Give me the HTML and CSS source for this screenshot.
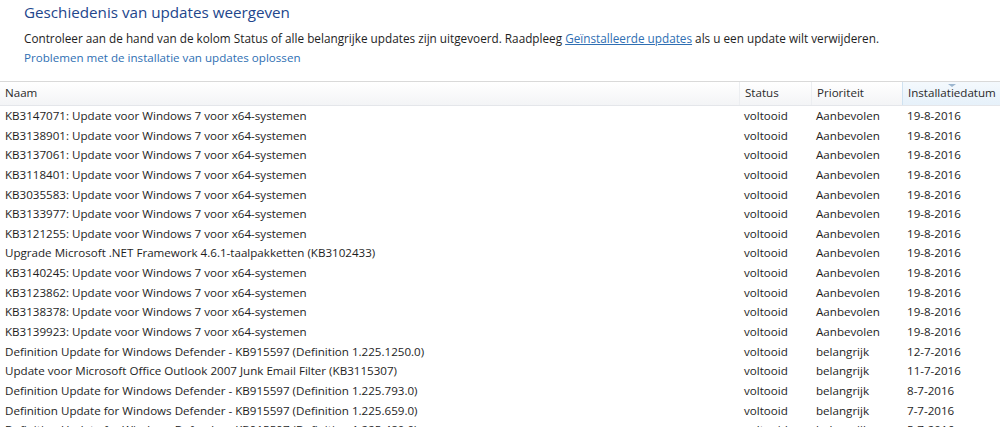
FILE: index.html
```html
<!DOCTYPE html>
<html lang="nl">
<head>
<meta charset="utf-8">
<title>Geschiedenis van updates weergeven</title>
<link rel="stylesheet" href="styles.css">
</head>
<body>
<div class="intro">
  <h1 class="title">Geschiedenis van updates weergeven</h1>
  <p class="desc">Controleer aan de hand van de kolom Status of alle belangrijke updates zijn uitgevoerd. Raadpleeg <a class="ul-link" href="#">Geïnstalleerde updates</a> als u een update wilt verwijderen.</p>
  <p class="fix"><a class="plain-link" href="#">Problemen met de installatie van updates oplossen</a></p>
</div>
<div class="list">
  <div class="row head">
    <div class="cell">Naam</div>
    <div class="cell sep">Status</div>
    <div class="cell sep">Prioriteit</div>
    <div class="cell sep sorted">Installatiedatum<span class="arrow"></span></div>
  </div>
  <div class="row"><div class="cell">KB3147071: Update voor Windows 7 voor x64-systemen</div><div class="cell">voltooid</div><div class="cell">Aanbevolen</div><div class="cell">19-8-2016</div></div>
  <div class="row"><div class="cell">KB3138901: Update voor Windows 7 voor x64-systemen</div><div class="cell">voltooid</div><div class="cell">Aanbevolen</div><div class="cell">19-8-2016</div></div>
  <div class="row"><div class="cell">KB3137061: Update voor Windows 7 voor x64-systemen</div><div class="cell">voltooid</div><div class="cell">Aanbevolen</div><div class="cell">19-8-2016</div></div>
  <div class="row"><div class="cell">KB3118401: Update voor Windows 7 voor x64-systemen</div><div class="cell">voltooid</div><div class="cell">Aanbevolen</div><div class="cell">19-8-2016</div></div>
  <div class="row"><div class="cell">KB3035583: Update voor Windows 7 voor x64-systemen</div><div class="cell">voltooid</div><div class="cell">Aanbevolen</div><div class="cell">19-8-2016</div></div>
  <div class="row"><div class="cell">KB3133977: Update voor Windows 7 voor x64-systemen</div><div class="cell">voltooid</div><div class="cell">Aanbevolen</div><div class="cell">19-8-2016</div></div>
  <div class="row"><div class="cell">KB3121255: Update voor Windows 7 voor x64-systemen</div><div class="cell">voltooid</div><div class="cell">Aanbevolen</div><div class="cell">19-8-2016</div></div>
  <div class="row"><div class="cell">Upgrade Microsoft .NET Framework 4.6.1-taalpakketten (KB3102433)</div><div class="cell">voltooid</div><div class="cell">Aanbevolen</div><div class="cell">19-8-2016</div></div>
  <div class="row"><div class="cell">KB3140245: Update voor Windows 7 voor x64-systemen</div><div class="cell">voltooid</div><div class="cell">Aanbevolen</div><div class="cell">19-8-2016</div></div>
  <div class="row"><div class="cell">KB3123862: Update voor Windows 7 voor x64-systemen</div><div class="cell">voltooid</div><div class="cell">Aanbevolen</div><div class="cell">19-8-2016</div></div>
  <div class="row"><div class="cell">KB3138378: Update voor Windows 7 voor x64-systemen</div><div class="cell">voltooid</div><div class="cell">Aanbevolen</div><div class="cell">19-8-2016</div></div>
  <div class="row"><div class="cell">KB3139923: Update voor Windows 7 voor x64-systemen</div><div class="cell">voltooid</div><div class="cell">Aanbevolen</div><div class="cell">19-8-2016</div></div>
  <div class="row"><div class="cell">Definition Update for Windows Defender - KB915597 (Definition 1.225.1250.0)</div><div class="cell">voltooid</div><div class="cell">belangrijk</div><div class="cell">12-7-2016</div></div>
  <div class="row"><div class="cell">Update voor Microsoft Office Outlook 2007 Junk Email Filter (KB3115307)</div><div class="cell">voltooid</div><div class="cell">belangrijk</div><div class="cell">11-7-2016</div></div>
  <div class="row"><div class="cell">Definition Update for Windows Defender - KB915597 (Definition 1.225.793.0)</div><div class="cell">voltooid</div><div class="cell">belangrijk</div><div class="cell">8-7-2016</div></div>
  <div class="row"><div class="cell">Definition Update for Windows Defender - KB915597 (Definition 1.225.659.0)</div><div class="cell">voltooid</div><div class="cell">belangrijk</div><div class="cell">7-7-2016</div></div>
  <div class="row"><div class="cell">Definition Update for Windows Defender - KB915597 (Definition 1.225.480.0)</div><div class="cell">voltooid</div><div class="cell">belangrijk</div><div class="cell">5-7-2016</div></div>
</div>
</body>
</html>
```

FILE: styles.css
```css
html, body {
  margin: 0;
  padding: 0;
  background: #ffffff;
  overflow: hidden;
}
body {
  font-family: "Open Sans", "Noto Sans", "Liberation Sans", sans-serif;
  font-size: 11.6px;
  color: #1e1e1e;
}
.intro {
  padding: 0 0 0 24px;
}
.title {
  margin: 0;
  padding-top: 0;
  font-size: 15.2px;
  font-weight: normal;
  line-height: 24px;
  color: #22468c;
}
.desc {
  margin: 6px 0 0;
  line-height: 17px;
  font-size: 11.75px;
}
.fix {
  margin: 2px 0 0;
  line-height: 17px;
}
.ul-link {
  color: #2f6fb3;
  text-decoration: underline;
}
.plain-link {
  color: #2f6fb3;
  text-decoration: none;
}
.list {
  margin-top: 15px;
  border-top: 1px solid #d9d9d9;
}
.row {
  display: grid;
  grid-template-columns: 739px 72px 91px 1fr;
  height: 19.65px;
  line-height: 19.65px;
  white-space: nowrap;
}
.cell {
  padding-left: 5px;
  overflow: hidden;
}
.row.head {
  height: 23px;
  line-height: 22px;
  background: linear-gradient(#ffffff, #f3f4f6);
  border-bottom: 1px solid #e4e6ea;
  color: #2a2a2a;
}
.head .sep {
  border-left: 1px solid #eceef1;
}
.head .sorted {
  position: relative;
  background: linear-gradient(#f4f9fd, #e6f1fa);
  border-left: 1px solid #cfe2f1;
}
.arrow {
  position: absolute;
  top: 2px;
  left: 45px;
  width: 0;
  height: 0;
  border-left: 4px solid transparent;
  border-right: 4px solid transparent;
  border-top: 3px solid #9cb6cf;
}
```
